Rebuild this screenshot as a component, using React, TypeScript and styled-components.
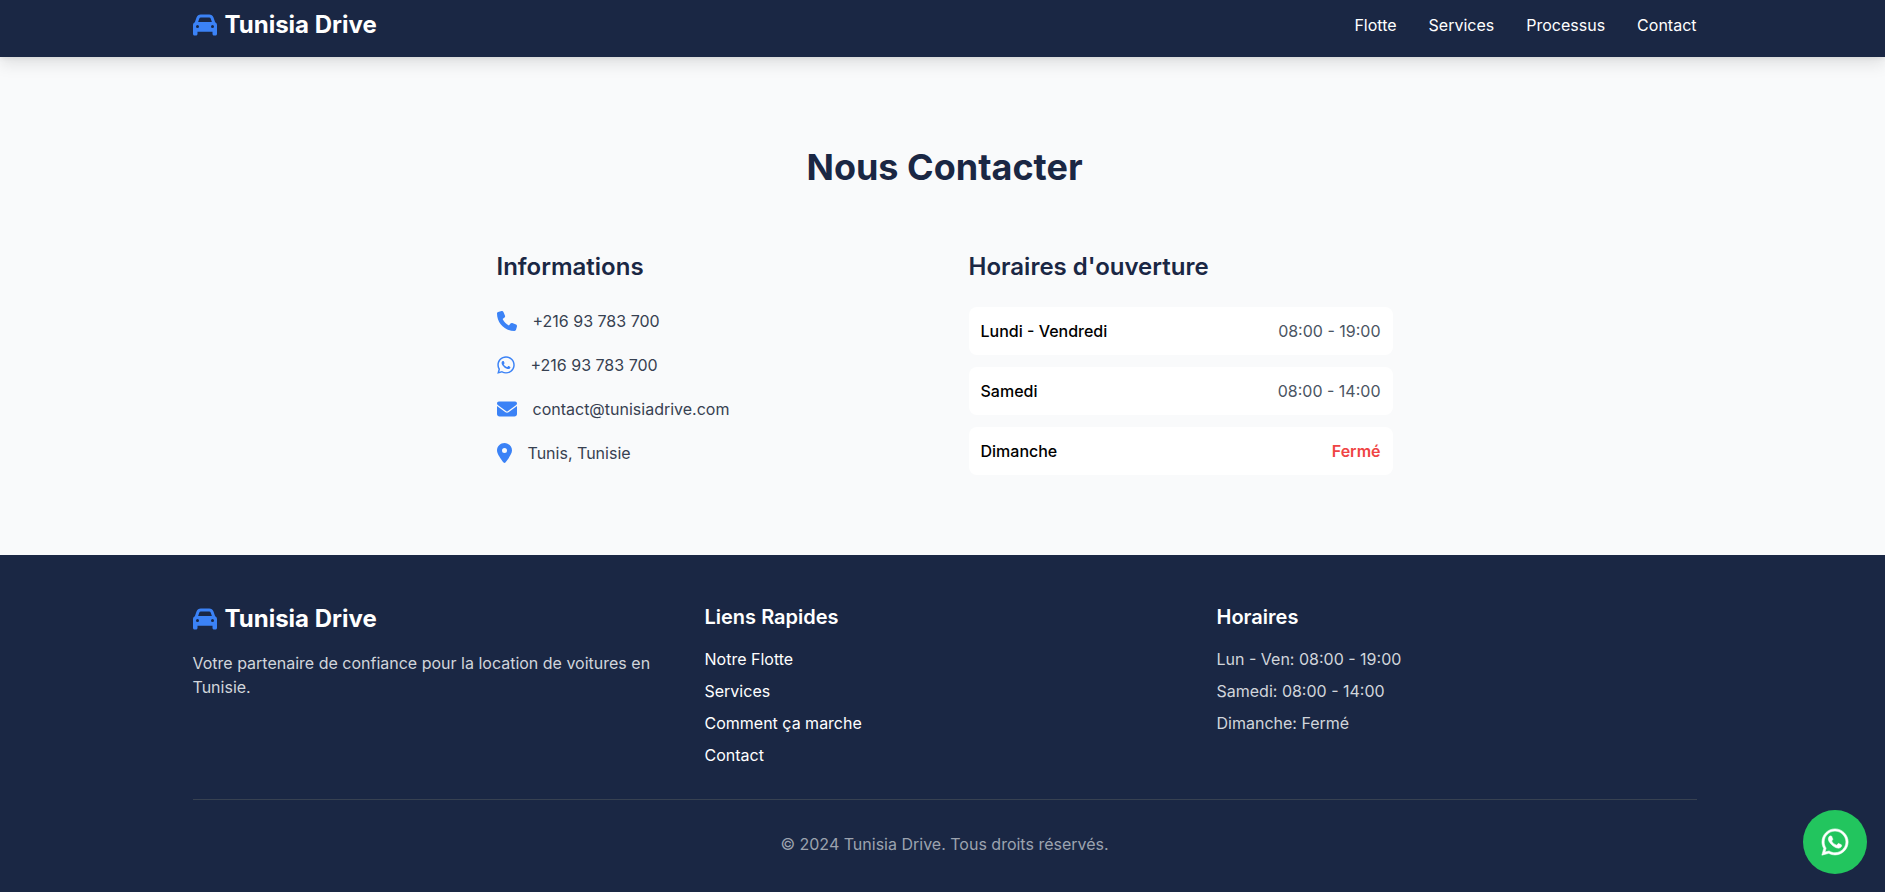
import React from "react";
import styled, { createGlobalStyle } from "styled-components";
import {
  FaCar,
  FaEnvelope,
  FaLocationDot,
  FaPhone,
  FaWhatsapp,
} from "react-icons/fa6";

const color = {
  navy: "#1a2744",
  blue: "#3b82f6",
  page: "#f9fafb",
};

const GlobalStyle = createGlobalStyle`
  *, *::before, *::after { box-sizing: border-box; }
  body {
    margin: 0;
    background: ${color.page};
    color: #000;
    font-family: Inter, sans-serif;
    font-size: 16px;
    line-height: 24px;
  }
  h2, h3, h4, p, ul, dl, dd { margin: 0; padding: 0; }
  ul { list-style: none; }
  a { color: inherit; text-decoration: none; }
  svg { display: block; flex: none; }
`;

const Container = styled.div<{ $width: number }>`
  max-width: ${({ $width }) => $width}px;
  margin: 0 auto;
`;

const Header = styled.header`
  position: sticky;
  top: 0;
  z-index: 10;
  padding: 9px 16px 16px 20px;
  background: ${color.navy};
  color: #fff;
  box-shadow: 0 7px 15px rgba(0, 0, 0, 0.1), 0 0 6px rgba(0, 0, 0, 0.1);
`;

const HeaderRow = styled.div`
  display: flex;
  flex-wrap: wrap;
  align-items: center;
  justify-content: space-between;
`;

const Brand = styled.a`
  display: flex;
  align-items: center;
  gap: 8px;
  font-size: 24px;
  line-height: 32px;
  font-weight: 700;
  color: #fff;

  svg { color: ${color.blue}; }
`;

const Nav = styled.nav`
  display: flex;
  gap: 32px;
  color: #fff;
`;

const Contact = styled.section`
  padding: 90px 16px 80px 20px;
`;

const Title = styled.h2`
  margin-bottom: 64px;
  font-size: 36px;
  line-height: 40px;
  font-weight: 700;
  text-align: center;
  color: ${color.navy};
`;

const ContactGrid = styled.div`
  display: grid;
  grid-template-columns: repeat(auto-fit, minmax(320px, 1fr));
  gap: 48px;
`;

const Subtitle = styled.h3`
  margin-bottom: 24px;
  font-size: 24px;
  line-height: 32px;
  font-weight: 600;
  color: ${color.navy};
`;

const InfoList = styled.ul`
  display: grid;
  gap: 16px;
`;

const InfoItem = styled.li<{ $iconWidth: number }>`
  display: flex;
  align-items: center;
  gap: 16px;
  min-height: 28px;
  color: #374151;

  svg {
    width: ${({ $iconWidth }) => $iconWidth}px;
    height: 20px;
    color: ${color.blue};
  }
`;

const HoursList = styled.dl`
  display: grid;
  gap: 12px;
`;

const HoursRow = styled.div`
  display: flex;
  justify-content: space-between;
  padding: 12px;
  border-radius: 8px;
  background: #fff;

  dt { font-weight: 500; }
`;

const HoursValue = styled.dd<{ $closed?: boolean }>`
  color: ${({ $closed }) => ($closed ? "#ef4444" : "#4b5563")};
  font-weight: ${({ $closed }) => ($closed ? 600 : 400)};
`;

const Footer = styled.footer`
  padding: 48px 16px 36px 20px;
  background: ${color.navy};
  color: #fff;
`;

const FooterGrid = styled.div`
  display: grid;
  grid-template-columns: repeat(auto-fit, minmax(280px, 1fr));
  gap: 32px;
  margin-bottom: 32px;
`;

const Tagline = styled.p`
  margin-top: 16px;
  color: #d1d5db;
`;

const FooterTitle = styled.h4`
  margin-bottom: 16px;
  font-size: 20px;
  line-height: 28px;
  font-weight: 600;
`;

const FooterList = styled.ul<{ $links?: boolean }>`
  display: grid;
  gap: 8px;
  color: ${({ $links }) => ($links ? "#fff" : "#d1d5db")};
`;

const Copyright = styled.p`
  padding-top: 32px;
  border-top: 1px solid #374151;
  text-align: center;
  color: #9ca3af;
`;

const ChatButton = styled.a`
  position: fixed;
  right: 18px;
  bottom: 18px;
  z-index: 20;
  display: grid;
  place-items: center;
  width: 64px;
  height: 64px;
  border-radius: 50%;
  background: #22c55e;
  color: #fff;

  svg {
    width: 30px;
    height: 30px;
    stroke-width: 10px;
  }
`;

const navLinks = ["Flotte", "Services", "Processus", "Contact"];
const quickLinks = ["Notre Flotte", "Services", "Comment ça marche", "Contact"];
const footerHours = [
  "Lun - Ven: 08:00 - 19:00",
  "Samedi: 08:00 - 14:00",
  "Dimanche: Fermé",
];

const details = [
  { icon: <FaPhone />, width: 20, text: "+216 93 783 700", href: "tel:+21693783700" },
  { icon: <FaWhatsapp />, width: 18, text: "+216 93 783 700", href: "#whatsapp" },
  {
    icon: <FaEnvelope />,
    width: 20,
    text: "contact@tunisiadrive.com",
    href: "mailto:contact@tunisiadrive.com",
  },
  { icon: <FaLocationDot />, width: 15, text: "Tunis, Tunisie" },
];

const hours = [
  { day: "Lundi - Vendredi", time: "08:00 - 19:00" },
  { day: "Samedi", time: "08:00 - 14:00" },
  { day: "Dimanche", time: "Fermé", closed: true },
];

const Logo = () => (
  <Brand href="#accueil">
    <FaCar />
    <span>Tunisia Drive</span>
  </Brand>
);

export default function App() {
  return (
    <>
      <GlobalStyle />
      <Header>
        <Container $width={1504}>
          <HeaderRow>
            <Logo />
            <Nav>
              {navLinks.map((label) => (
                <a key={label} href={`#${label.toLowerCase()}`}>{label}</a>
              ))}
            </Nav>
          </HeaderRow>
        </Container>
      </Header>

      <main>
        <Contact id="contact">
          <Title>Nous Contacter</Title>
          <Container $width={896}>
            <ContactGrid>
              <div>
                <Subtitle>Informations</Subtitle>
                <InfoList>
                  {details.map(({ icon, width, text, href }, i) => (
                    <InfoItem key={i} $iconWidth={width}>
                      {icon}
                      {href ? <a href={href}>{text}</a> : <span>{text}</span>}
                    </InfoItem>
                  ))}
                </InfoList>
              </div>
              <div>
                <Subtitle>Horaires d'ouverture</Subtitle>
                <HoursList>
                  {hours.map(({ day, time, closed }) => (
                    <HoursRow key={day}>
                      <dt>{day}</dt>
                      <HoursValue $closed={closed}>{time}</HoursValue>
                    </HoursRow>
                  ))}
                </HoursList>
              </div>
            </ContactGrid>
          </Container>
        </Contact>
      </main>

      <Footer>
        <Container $width={1504}>
          <FooterGrid>
            <div>
              <Logo />
              <Tagline>
                Votre partenaire de confiance pour la location de voitures en
                Tunisie.
              </Tagline>
            </div>
            <div>
              <FooterTitle>Liens Rapides</FooterTitle>
              <FooterList $links>
                {quickLinks.map((label) => (
                  <li key={label}><a href="#liens">{label}</a></li>
                ))}
              </FooterList>
            </div>
            <div>
              <FooterTitle>Horaires</FooterTitle>
              <FooterList>
                {footerHours.map((line) => (
                  <li key={line}>{line}</li>
                ))}
              </FooterList>
            </div>
          </FooterGrid>
          <Copyright>© 2024 Tunisia Drive. Tous droits réservés.</Copyright>
        </Container>
      </Footer>

      <ChatButton href="#whatsapp" aria-label="WhatsApp">
        <FaWhatsapp />
      </ChatButton>
    </>
  );
}
